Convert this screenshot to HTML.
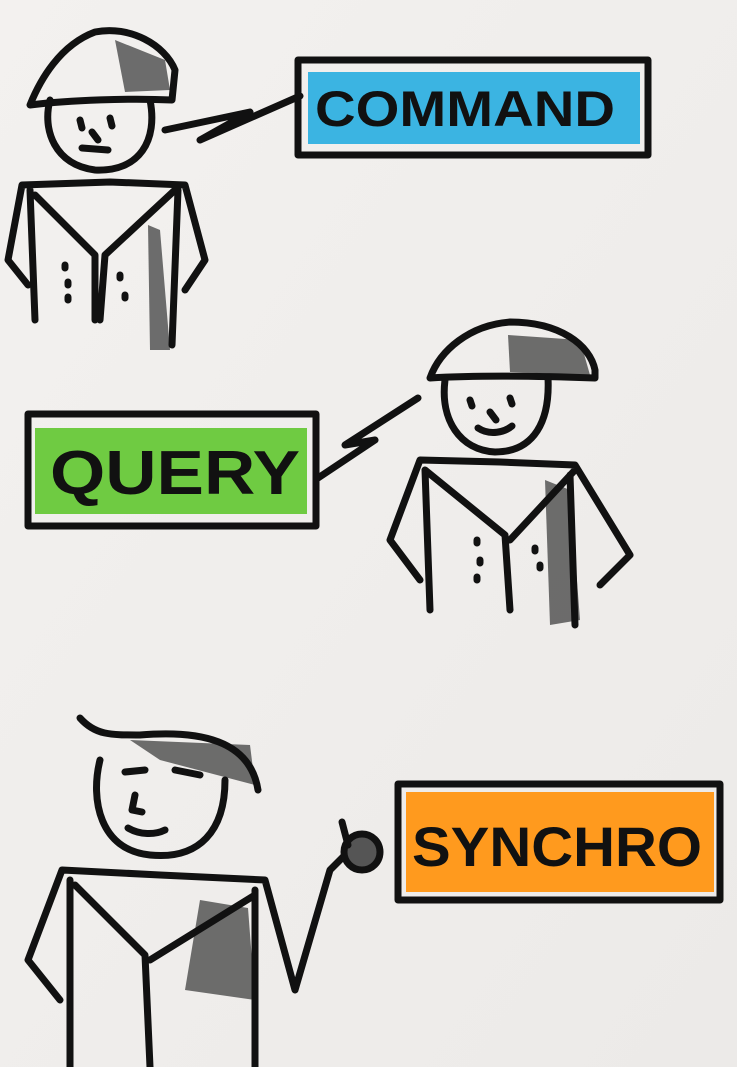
<!DOCTYPE html>
<html><head><meta charset="utf-8">
<style>
html,body{margin:0;padding:0;width:737px;height:1067px;overflow:hidden;background:#f1efed}
svg{display:block}
text{font-family:"Liberation Sans",sans-serif;font-weight:bold}
</style></head>
<body>
<svg width="737" height="1067" viewBox="0 0 737 1067" xmlns="http://www.w3.org/2000/svg">
<defs>
<linearGradient id="bg" x1="0" y1="0" x2="1" y2="1">
<stop offset="0" stop-color="#f3f1ef"/><stop offset="1" stop-color="#eceae8"/>
</linearGradient>
</defs>
<rect width="737" height="1067" fill="url(#bg)"/>

<g fill="none" stroke="#111" stroke-width="7" stroke-linecap="round" stroke-linejoin="round">
<!-- Figure 1 -->
<path d="M115 40 L165 60 L170 90 L125 92 Z" fill="#555" stroke="none" opacity="0.85"/>
<path d="M30 105 C40 80 60 45 95 32 C130 25 165 45 175 70 L172 100 C130 98 70 100 30 105 Z"/>
<path d="M50 100 C42 130 55 165 95 170 C140 172 158 140 150 100"/>
<path d="M80 120 L82 128 M110 118 L112 126 M92 132 L98 140 M82 148 L108 150"/>
<path d="M148 225 L160 230 L170 350 L150 350 Z" fill="#555" stroke="none" opacity="0.85"/>
<path d="M22 185 L110 182 L185 185 M22 185 L8 260 L28 285 M185 185 L205 260 L185 290 M30 190 L35 320 M178 190 L172 345 M35 195 L95 255 M175 190 L105 255 L100 320 M95 255 L95 320"/>
<path d="M65 265 l0 3 M68 282 l0 3 M68 297 l0 3 M120 275 l0 3 M125 295 l0 3"/>
<path d="M165 130 L250 112 L200 140 L300 96"/>
<!-- Command box -->
<rect x="308" y="72" width="332" height="72" fill="#3bb4e2" stroke="none"/>
<rect x="298" y="60" width="350" height="95"/>
<!-- Figure 2 -->
<path d="M508 335 L580 340 L590 375 L510 372 Z" fill="#555" stroke="none" opacity="0.85"/>
<path d="M430 378 C440 350 470 325 510 322 C560 322 590 345 595 370 L595 378 C540 376 480 375 430 378 Z"/>
<path d="M445 380 C440 420 460 450 495 452 C535 452 550 420 548 378"/>
<path d="M470 400 l2 6 M510 398 l2 6 M490 412 l6 8 M478 428 C490 436 505 432 512 426"/>
<path d="M545 480 L570 490 L580 620 L550 625 Z" fill="#555" stroke="none" opacity="0.85"/>
<path d="M420 460 L500 462 L575 465 M420 460 L390 540 L420 580 M575 465 L630 555 L600 585 M425 470 L430 610 M570 475 L575 625 M425 470 L505 535 L510 610 M575 470 L510 540"/>
<path d="M477 540 l0 3 M480 560 l0 3 M477 577 l0 3 M535 548 l0 3 M540 565 l0 3"/>
<path d="M418 398 L345 445 L375 440 L318 478"/>
<!-- Query box -->
<rect x="35" y="428" width="272" height="86" fill="#6fcb42" stroke="none"/>
<rect x="28" y="414" width="288" height="112"/>
<!-- Figure 3 -->
<path d="M130 740 L250 745 L255 785 L160 760 Z" fill="#555" stroke="none" opacity="0.85"/>
<path d="M80 718 C95 735 110 735 140 735 C200 730 250 740 258 790 M100 760 C90 800 100 850 150 855 C200 860 225 830 225 780"/>
<path d="M125 772 L145 770 M175 770 L200 775 M135 795 L132 810 L142 812 M128 828 C140 835 155 835 165 830"/>
<path d="M200 900 L248 908 L255 1000 L185 990 Z" fill="#555" stroke="none" opacity="0.85"/>
<path d="M62 870 L160 875 L265 880 M62 870 L28 960 L60 1000 M265 880 L295 990 L330 870 L355 845 M70 880 L70 1067 M255 890 L255 1067 M75 885 L145 955 L150 1067 M255 895 L150 960"/>
<circle cx="362" cy="852" r="18" fill="#555"/>
<path d="M348 845 L342 822"/>
<!-- Synchro box -->
<rect x="406" y="792" width="308" height="100" fill="#ff9a1e" stroke="none"/>
<rect x="398" y="784" width="322" height="116"/>
</g>

<text x="315" y="126" font-size="50" textLength="300" lengthAdjust="spacingAndGlyphs" fill="#111">COMMAND</text>
<text x="50" y="494" font-size="62" textLength="250" lengthAdjust="spacingAndGlyphs" fill="#111">QUERY</text>
<text x="412" y="866" font-size="56" textLength="290" lengthAdjust="spacingAndGlyphs" fill="#111">SYNCHRO</text>
</svg>
</body></html>
